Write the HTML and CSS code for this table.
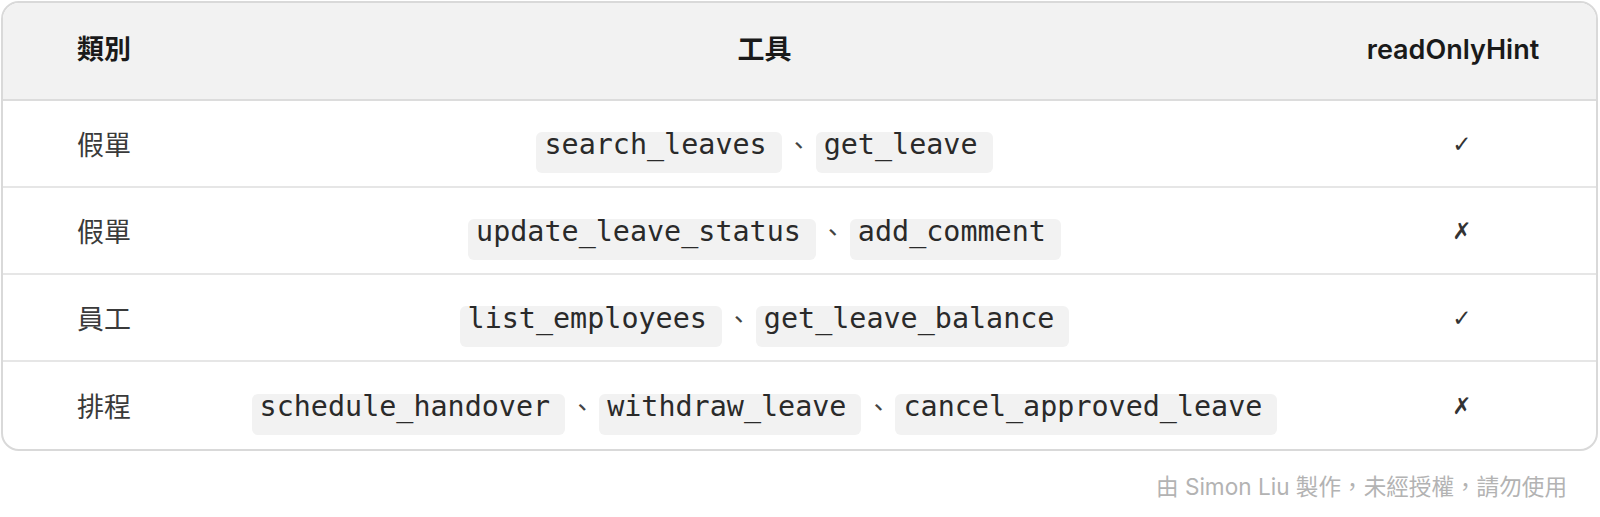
FILE: index.html
```html
<!DOCTYPE html>
<html lang="zh-Hant">
  <head>
    <meta charset="UTF-8" />
    <title>工具列表</title>
    <link rel="stylesheet" href="styles.css">
  </head>
  <body>
    <div class="tools-card">
      <table class="tools-table">
        <colgroup>
          <col class="col-kind" />
          <col class="col-tool" />
          <col class="col-hint" />
        </colgroup>
        <thead>
          <tr>
            <th class="cell-kind">類別</th>
            <th>工具</th>
            <th>readOnlyHint</th>
          </tr>
        </thead>
        <tbody>
          <tr>
            <td class="cell-kind">假單</td>
            <td class="cell-tool"><code>search_leaves</code><span class="sep">、</span><code>get_leave</code></td>
            <td class="cell-hint">✓</td>
          </tr>
          <tr>
            <td class="cell-kind">假單</td>
            <td class="cell-tool"><code>update_leave_status</code><span class="sep">、</span><code>add_comment</code></td>
            <td class="cell-hint">✗</td>
          </tr>
          <tr>
            <td class="cell-kind">員工</td>
            <td class="cell-tool"><code>list_employees</code><span class="sep">、</span><code>get_leave_balance</code></td>
            <td class="cell-hint">✓</td>
          </tr>
          <tr>
            <td class="cell-kind">排程</td>
            <td class="cell-tool"><code>schedule_handover</code><span class="sep">、</span><code>withdraw_leave</code><span class="sep">、</span><code>cancel_approved_leave</code></td>
            <td class="cell-hint">✗</td>
          </tr>
        </tbody>
      </table>
    </div>
    <p class="credit">由 Simon Liu 製作，未經授權，請勿使用</p>
  </body>
</html>
```

FILE: styles.css
```css
body {
  margin: 0;
  background-color: #ffffff;
  font-family: Inter, "Noto Sans CJK TC", sans-serif;
  color: #333333;
}

.tools-card {
  margin: 1px 2px 0 1px;
  border: 2px solid #d9d9d9;
  border-radius: 18px;
  overflow: hidden;
}

.tools-table {
  width: 100%;
  border-collapse: collapse;
  table-layout: fixed;
}

.col-kind {
  width: 216px;
}

.col-hint {
  width: 286px;
}

.tools-table th {
  height: 94px;
  padding: 0 0 2px;
  background-color: #f2f2f2;
  border-bottom: 2px solid #dcdcdc;
  font-size: 27px;
  line-height: 1.2;
  font-weight: 600;
  color: #1a1a1a;
  text-align: center;
}

.tools-table td {
  height: 85px;
  padding: 0;
  font-size: 26px;
  text-align: center;
  border-bottom: 2px solid #e6e6e6;
}

.tools-table tbody tr:last-child td {
  height: 87px;
  border-bottom: none;
}

.tools-table .cell-kind {
  text-align: left;
  padding-left: 74px;
}

.tools-table td.cell-kind {
  font-family: "Noto Sans CJK TC", sans-serif;
  font-size: 27px;
  color: #3a3a3a;
}

.tools-table td.cell-tool {
  padding-top: 12px;
  height: 73px;
}

.tools-table tbody tr:last-child td.cell-tool {
  height: 75px;
}

.cell-tool code {
  display: inline-block;
  vertical-align: baseline;
  font-family: "DejaVu Sans Mono", monospace;
  font-size: 28.4px;
  line-height: 0.9;
  color: #2a2a2a;
  background-color: #f2f2f2;
  border-radius: 6px;
  padding: 0 15px 16px 8px;
}

.sep {
  margin: 0 5px;
  font-family: "Noto Sans CJK TC", sans-serif;
  font-size: 24px;
  color: #444444;
}

.tools-table td.cell-hint {
  padding-left: 18px;
  font-family: "DejaVu Sans", sans-serif;
  font-size: 23px;
  color: #333333;
}

.credit {
  margin: 18px 33px 0 0;
  text-align: right;
  font-family: Inter, "Noto Sans CJK TC", sans-serif;
  font-size: 22.6px;
  color: #b3b3b3;
}
```
